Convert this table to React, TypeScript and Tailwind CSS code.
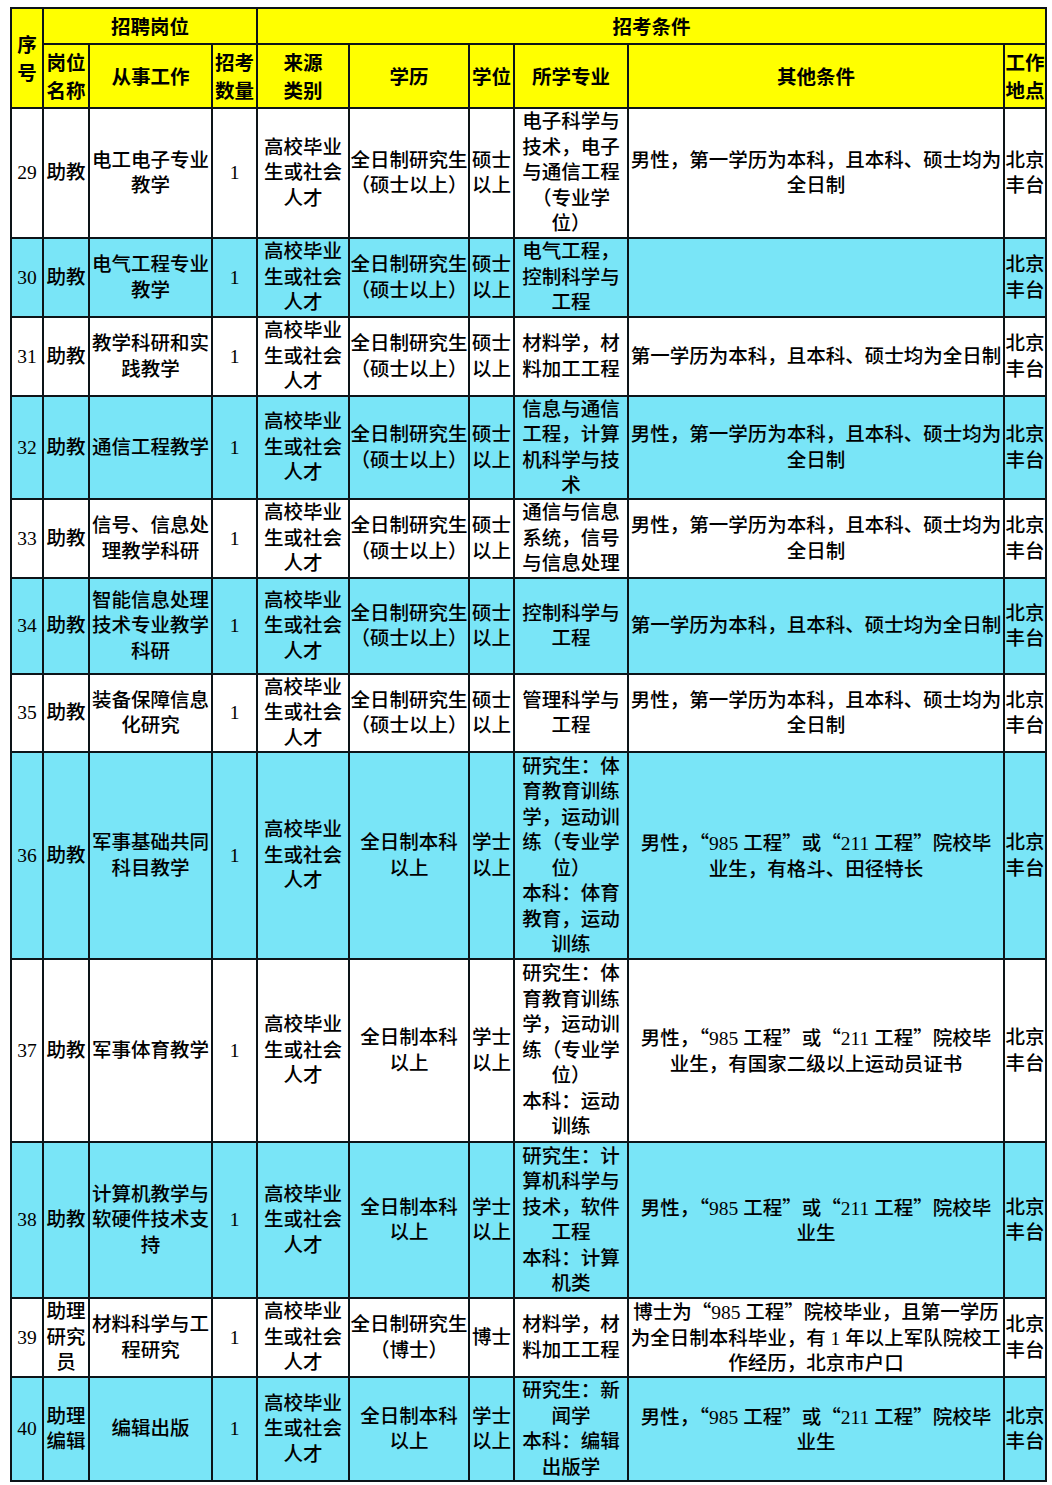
const BODY_FONT = "font-['Liberation_Serif','Noto_Sans_CJK_SC',serif]";

type Row = {
  no: string;
  post: string[];
  work: string[];
  source: string[];
  edu: string[];
  degree: string[];
  major: string[];
  other: string[];
};

const SOURCE = ['高校毕业', '生或社会', '人才'];
const MASTER = ['全日制研究生', '（硕士以上）'];
const BACHELOR = ['全日制本科', '以上'];
const MALE_FULL = ['男性，第一学历为本科，且本科、硕士均为', '全日制'];
const FIRST_FULL = ['第一学历为本科，且本科、硕士均为全日制'];

const ROWS: Row[] = [
  { no: '29', post: ['助教'], work: ['电工电子专业', '教学'], source: SOURCE, edu: MASTER, degree: ['硕士', '以上'], major: ['电子科学与', '技术，电子', '与通信工程', '（专业学', '位）'], other: MALE_FULL },
  { no: '30', post: ['助教'], work: ['电气工程专业', '教学'], source: SOURCE, edu: MASTER, degree: ['硕士', '以上'], major: ['电气工程，', '控制科学与', '工程'], other: [] },
  { no: '31', post: ['助教'], work: ['教学科研和实', '践教学'], source: SOURCE, edu: MASTER, degree: ['硕士', '以上'], major: ['材料学，材', '料加工工程'], other: FIRST_FULL },
  { no: '32', post: ['助教'], work: ['通信工程教学'], source: SOURCE, edu: MASTER, degree: ['硕士', '以上'], major: ['信息与通信', '工程，计算', '机科学与技', '术'], other: MALE_FULL },
  { no: '33', post: ['助教'], work: ['信号、信息处', '理教学科研'], source: SOURCE, edu: MASTER, degree: ['硕士', '以上'], major: ['通信与信息', '系统，信号', '与信息处理'], other: MALE_FULL },
  { no: '34', post: ['助教'], work: ['智能信息处理', '技术专业教学', '科研'], source: SOURCE, edu: MASTER, degree: ['硕士', '以上'], major: ['控制科学与', '工程'], other: FIRST_FULL },
  { no: '35', post: ['助教'], work: ['装备保障信息', '化研究'], source: SOURCE, edu: MASTER, degree: ['硕士', '以上'], major: ['管理科学与', '工程'], other: MALE_FULL },
  {
    no: '36', post: ['助教'], work: ['军事基础共同', '科目教学'], source: SOURCE, edu: BACHELOR, degree: ['学士', '以上'],
    major: ['研究生：体', '育教育训练', '学，运动训', '练（专业学', '位）', '本科：体育', '教育，运动', '训练'],
    other: ['男性，“985 工程”或“211 工程”院校毕', '业生，有格斗、田径特长'],
  },
  {
    no: '37', post: ['助教'], work: ['军事体育教学'], source: SOURCE, edu: BACHELOR, degree: ['学士', '以上'],
    major: ['研究生：体', '育教育训练', '学，运动训', '练（专业学', '位）', '本科：运动', '训练'],
    other: ['男性，“985 工程”或“211 工程”院校毕', '业生，有国家二级以上运动员证书'],
  },
  {
    no: '38', post: ['助教'], work: ['计算机教学与', '软硬件技术支', '持'], source: SOURCE, edu: BACHELOR, degree: ['学士', '以上'],
    major: ['研究生：计', '算机科学与', '技术，软件', '工程', '本科：计算', '机类'],
    other: ['男性，“985 工程”或“211 工程”院校毕', '业生'],
  },
  {
    no: '39', post: ['助理', '研究', '员'], work: ['材料科学与工', '程研究'], source: SOURCE, edu: ['全日制研究生', '（博士）'], degree: ['博士'],
    major: ['材料学，材', '料加工工程'],
    other: ['博士为“985 工程”院校毕业，且第一学历', '为全日制本科毕业，有 1 年以上军队院校工', '作经历，北京市户口'],
  },
  {
    no: '40', post: ['助理', '编辑'], work: ['编辑出版'], source: SOURCE, edu: BACHELOR, degree: ['学士', '以上'],
    major: ['研究生：新', '闻学', '本科：编辑', '出版学'],
    other: ['男性，“985 工程”或“211 工程”院校毕', '业生'],
  },
];

// quotes look full width in the source, so route them to the CJK face
function Txt({ s }: { s: string }) {
  const parts = s.split(/([“”])/);
  return (
    <>
      {parts.map((p, i) =>
        p === '“' || p === '”' ? (
          <span key={i} className="font-['Noto_Sans_CJK_SC',sans-serif]">
            {p}
          </span>
        ) : (
          p
        )
      )}
    </>
  );
}

function Cell({ lines, bg, className = '' }: { lines: string[]; bg: string; className?: string }) {
  return (
    <div className={`flex flex-col items-center justify-center text-center ${bg} ${className}`}>
      {lines.map((l, i) => (
        <div key={i} className="whitespace-nowrap">
          <Txt s={l} />
        </div>
      ))}
    </div>
  );
}

function Head({ lines, className = '' }: { lines: string[]; className?: string }) {
  return (
    <div
      className={`flex flex-col items-center justify-center bg-[#ffff00] text-center font-bold leading-[28px] font-['Noto_Sans_CJK_SC',sans-serif] ${className}`}
    >
      {lines.map((l) => (
        <div key={l} className="whitespace-nowrap">
          {l}
        </div>
      ))}
    </div>
  );
}

export default function App() {
  return (
    <div className="min-h-screen bg-white pl-[10px] pt-[7px]">
      <div
        className={`grid w-fit grid-cols-[30px_44px_121px_43px_90px_118px_43px_112px_374px_40px] grid-rows-[34px_62px_128px_77px_77px_101px_77px_94px_76px_205px_181px_154px_77px_102px] gap-[2px] bg-[#0d1418] p-[2px] text-[19.5px] font-medium leading-[25.5px] text-black ${BODY_FONT}`}
      >
        <Head lines={['序', '号']} className="row-span-2" />
        <Head lines={['招聘岗位']} className="col-span-3" />
        <Head lines={['招考条件']} className="col-span-6" />
        <Head lines={['岗位', '名称']} />
        <Head lines={['从事工作']} />
        <Head lines={['招考', '数量']} />
        <Head lines={['来源', '类别']} />
        <Head lines={['学历']} />
        <Head lines={['学位']} />
        <Head lines={['所学专业']} />
        <Head lines={['其他条件']} />
        <Head lines={['工作', '地点']} />

        {ROWS.map((r, idx) => {
          const bg = idx % 2 === 1 ? 'bg-[#79e5f7]' : 'bg-white';
          return [
            <Cell key={`${r.no}-no`} lines={[r.no]} bg={bg} />,
            <Cell key={`${r.no}-post`} lines={r.post} bg={bg} />,
            <Cell key={`${r.no}-work`} lines={r.work} bg={bg} />,
            <Cell key={`${r.no}-num`} lines={['1']} bg={bg} />,
            <Cell key={`${r.no}-src`} lines={r.source} bg={bg} />,
            <Cell key={`${r.no}-edu`} lines={r.edu} bg={bg} />,
            <Cell key={`${r.no}-deg`} lines={r.degree} bg={bg} />,
            <Cell key={`${r.no}-maj`} lines={r.major} bg={bg} />,
            <Cell key={`${r.no}-oth`} lines={r.other} bg={bg} />,
            <Cell key={`${r.no}-loc`} lines={['北京', '丰台']} bg={bg} />,
          ];
        })}
      </div>
    </div>
  );
}
